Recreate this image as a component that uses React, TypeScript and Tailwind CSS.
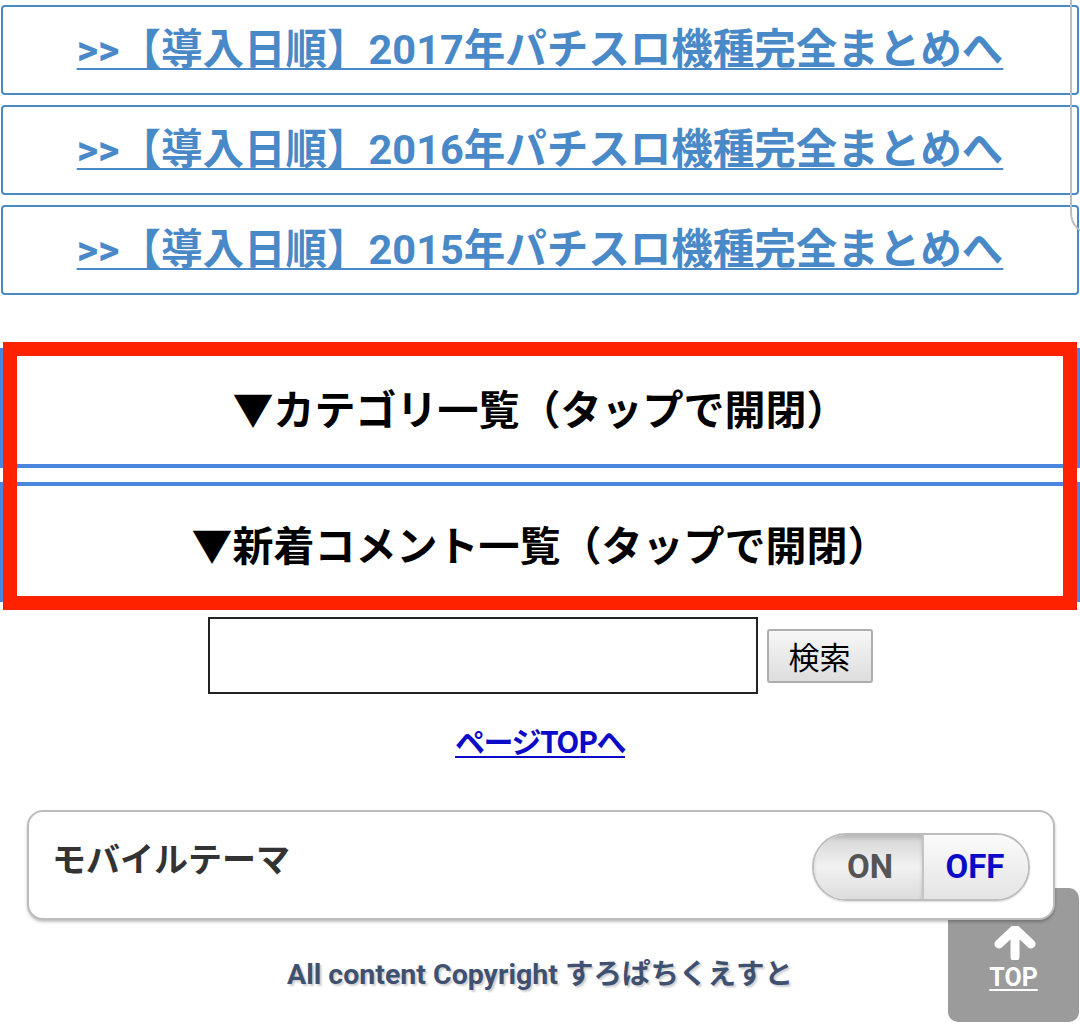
import React from "react";

const LinkBox = ({ year }: { year: string }) => (
  <div className="h-[90px] border-2 border-[#4a89c8] rounded-[4px] flex items-center justify-center bg-white">
    <a
      href="#"
      className="text-[41.5px] leading-[48px] font-bold text-[#4a89c8] underline decoration-[2px] underline-offset-[4px] whitespace-nowrap"
    >
      {`>>【導入日順】${year}年パチスロ機種完全まとめへ`}
    </a>
  </div>
);

export default function App() {
  return (
    <div className="relative w-[1080px] h-[1028px] overflow-hidden bg-white font-['Roboto','Noto_Sans_CJK_JP',sans-serif]">
      {/* top link boxes */}
      <div className="flex flex-col gap-[10px] pt-[5px] pl-[1px] pr-[1px]">
        <LinkBox year="2017" />
        <LinkBox year="2016" />
        <LinkBox year="2015" />
      </div>

      {/* overlay edge at top right */}
      <div className="absolute left-[1070px] top-[-20px] w-[30px] h-[255px] border-l-2 border-b-2 border-[#bdbdbd] rounded-bl-[22px]" />

      {/* category boxes */}
      <div className="relative mt-[53px]">
        <div className="h-[120px] border-4 border-[#4a86df] bg-white flex items-center justify-center pb-[2px]">
          <span className="text-[41px] leading-[50px] font-bold text-black font-['Noto_Sans_CJK_JP',sans-serif]">
            ▼カテゴリ一覧（タップで開閉）
          </span>
        </div>
        <div className="mt-[14px] h-[120px] border-4 border-[#4a86df] bg-white flex items-center justify-center pt-[2px]">
          <span className="text-[41px] leading-[50px] font-bold text-black font-['Noto_Sans_CJK_JP',sans-serif]">
            ▼新着コメント一覧（タップで開閉）
          </span>
        </div>
        <div className="absolute left-[3px] top-[-6px] w-[1074px] h-[268px] border-[14px] border-[#ff2200]" />
      </div>

      {/* search */}
      <div className="mt-[15px] flex items-center justify-center gap-[9px]">
        <input
          type="text"
          className="w-[550px] h-[77px] border-2 border-[#222] bg-white outline-none"
        />
        <button className="w-[106px] h-[54px] border-2 border-[#adadad] rounded-[3px] bg-gradient-to-b from-[#f7f7f7] to-[#dddddd] text-[31px] leading-[40px] text-black font-['Noto_Sans_CJK_JP',sans-serif] font-normal">
          検索
        </button>
      </div>

      {/* page top link */}
      <div className="mt-[26px] h-[40px] flex items-center justify-center">
        <a
          href="#"
          className="text-[30px] leading-[36px] font-bold text-[#0a0ac8] underline decoration-[2px] underline-offset-[3px] font-['Noto_Sans_CJK_JP',sans-serif] tracking-[-1.5px]"
        >
          ページTOPへ
        </a>
      </div>

      {/* mobile theme */}
      <div className="relative z-10 mt-[50px] ml-[27px] w-[1028px] h-[110px] bg-white border-2 border-[#bcbcbc] rounded-[16px] shadow-[0_2px_3px_rgba(0,0,0,0.25)] flex items-center justify-between pl-[23px] pr-[23px]">
        <span className="text-[34px] leading-[44px] font-bold text-[#333] font-['Noto_Sans_CJK_JP',sans-serif] -mt-[14px]">
          モバイルテーマ
        </span>
        <div className="flex w-[218px] h-[68px] rounded-full border-2 border-[#bdbdbd] overflow-hidden mt-[4px] shadow-[0_1px_2px_rgba(0,0,0,0.15)]">
          <div className="w-[110px] h-full flex items-center justify-center bg-gradient-to-b from-[#d4d4d4] via-[#f2f2f2] to-[#dcdcdc] border-r-2 border-[#c4c4c4] shadow-[inset_0_3px_4px_rgba(0,0,0,0.15)]">
            <span className="text-[33px] font-bold text-[#555] font-['Roboto',sans-serif] pl-[4px]">ON</span>
          </div>
          <div className="flex-1 h-full flex items-center justify-center bg-gradient-to-b from-[#fbfbfb] to-[#e4e4e4]">
            <span className="text-[33px] font-bold text-[#0a0ac8] font-['Roboto',sans-serif] pr-[2px]">OFF</span>
          </div>
        </div>
      </div>

      {/* copyright */}
      <div className="mt-[37px] h-[36px] flex items-center justify-center">
        <span className="text-[28.5px] leading-[36px] font-bold text-[#3f5070] [text-shadow:2px_2px_2px_#d0d0d0] font-['Roboto','Noto_Sans_CJK_JP',sans-serif]">
          All content Copyright すろぱちくえすと
        </span>
      </div>

      {/* TOP button */}
      <div className="absolute left-[948px] top-[888px] w-[131px] h-[134px] rounded-[10px] bg-[#9b9b9b] flex flex-col items-center pt-[38px]">
        <svg width="42" height="34" viewBox="0 0 42 34" className="ml-[2px]">
          <path
            d="M21 3 L21 31 M5 18 L21 3 L37 18"
            fill="none"
            stroke="#fff"
            strokeWidth="9"
            strokeLinecap="round"
            strokeLinejoin="round"
          />
        </svg>
        <span className="mt-[5px] text-[25px] leading-[26px] font-bold text-white underline decoration-[2px] underline-offset-[3px] font-['Roboto',sans-serif]">
          TOP
        </span>
      </div>
    </div>
  );
}
